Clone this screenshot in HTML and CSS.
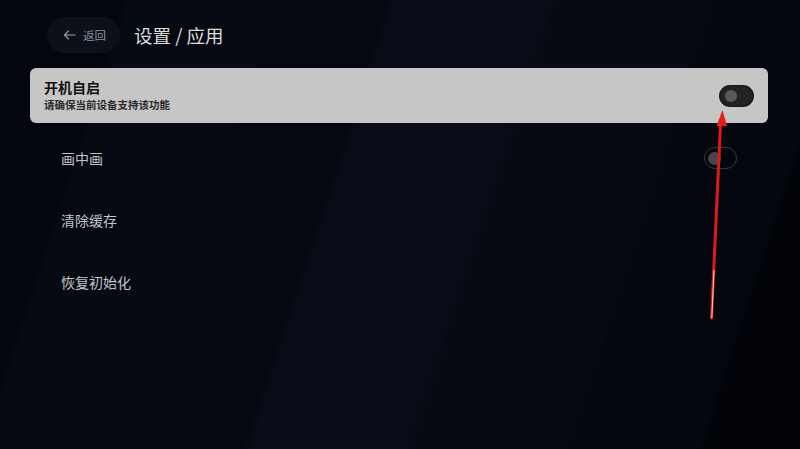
FILE: index.html
```html
<!DOCTYPE html>
<html lang="zh-CN">
<head>
  <meta charset="UTF-8">
  <title>设置 / 应用</title>
  <meta name="viewport" content="width=device-width, initial-scale=1.0">
  <link rel="stylesheet" href="styles.css">
</head>
<body>

<div class="page">
  <div class="header">
    <div class="back">
      <svg width="13" height="12" viewBox="0 0 13 12">
        <path d="M12.5 6H1.5M5.8 1.7L1.5 6l4.3 4.3" fill="none" stroke="#9aa0a8" stroke-width="1.2"/>
      </svg>
      <span>返回</span>
    </div>
    <h1>设置 / 应用</h1>
  </div>

  <div class="list">
    <div class="item active">
      <div class="text">
        <div class="name">开机自启</div>
        <div class="desc">请确保当前设备支持该功能</div>
      </div>
      <div class="switch"><i></i></div>
    </div>
    <div class="item">
      <div class="text"><div class="name">画中画</div></div>
      <div class="switch"><i></i></div>
    </div>
    <div class="item">
      <div class="text"><div class="name">清除缓存</div></div>
    </div>
    <div class="item">
      <div class="text"><div class="name">恢复初始化</div></div>
    </div>
  </div>
</div>

<!-- 标注箭头 -->
<svg class="arrow" width="800" height="449" viewBox="0 0 800 449">
  <path d="M711.5 318 L720.5 124" stroke="#e01818" stroke-width="3" stroke-linecap="round"/>
  <path d="M711.8 318 L714 270" stroke="#f4d0d0" stroke-width="1"/>
  <path d="M722.5 110 L716.5 126 L727 126 Z" fill="#e81a1a"/>
</svg>

</body>
</html>
```

FILE: styles.css
```css
html, body {
  margin: 0;
  height: 100%;
}

* {
  box-sizing: border-box;
}

body {
  font-family: "Noto Sans CJK SC", "Noto Sans", sans-serif;
  /* 斜向的暗色光带 */
  background:
    linear-gradient(108deg,
      #03060d 0%, #03060d 13%,
      #060a13 14%, #060a13 29%,
      #050810 30%, #050810 41%,
      #080d18 42%, #080d18 58%,
      #060a13 59%, #060a13 75%,
      #04070e 76%, #04070e 89%,
      #010309 90%);
  color: #d8d8d8;
  overflow: hidden;
}

.page {
  padding: 17px 32px 0 30px;
}

.header {
  display: flex;
  align-items: center;
  gap: 14px;
  padding-left: 17px;
  height: 36px;
}

.back {
  display: flex;
  align-items: center;
  gap: 7px;
  width: 73px;
  height: 36px;
  padding-left: 16px;
  border-radius: 18px;
  background: #0b1019;
  color: #8e939b;
  font-size: 11.5px;
}

h1 {
  margin: 0;
  font-size: 18.5px;
  font-weight: 400;
  color: #dcdcdc;
}

.list {
  margin-top: 15px;
  display: flex;
  flex-direction: column;
}

.item {
  display: flex;
  align-items: center;
  justify-content: space-between;
  height: 62px;
  padding: 0 31px;
  border-radius: 6px;
}

.item .name {
  font-size: 14px;
  color: #c4c4c4;
}

.item.active {
  height: 55px;
  padding: 0 14px;
  margin-bottom: 4px;
  background: #c6c6c6;
}

.item.active .name {
  font-size: 14px;
  font-weight: 700;
  color: #111;
  line-height: 18px;
}

.item.active .desc {
  margin-top: 1px;
  font-size: 10.5px;
  font-weight: 700;
  color: #2a2a2a;
  line-height: 16px;
}

.switch {
  width: 33px;
  height: 22px;
  border-radius: 11px;
  border: 1.5px solid #35383d;
  display: flex;
  align-items: center;
  padding-left: 3px;
}

.switch i {
  width: 13px;
  height: 13px;
  border-radius: 50%;
  background: #45474b;
}

.item.active .switch {
  width: 35px;
  height: 22px;
  border: 2px solid #1c1c1c;
  background: #232323;
  padding-left: 4px;
}

.item.active .switch i {
  width: 12px;
  height: 12px;
  background: #5a5a5a;
}

.arrow {
  position: absolute;
  left: 0;
  top: 0;
  pointer-events: none;
}
```
